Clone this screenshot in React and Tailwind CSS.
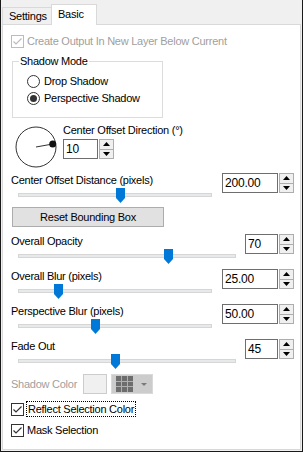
import React from 'react';

const font = { fontFamily: '"Liberation Sans", Arial, sans-serif' };

const Check = ({ disabled }) => (
    <div className={`w-[13px] h-[13px] shrink-0 border bg-white flex items-center justify-center ${disabled ? 'border-[#bcbcbc]' : 'border-[#333333]'}`}>
        <svg width="11" height="11" viewBox="0 0 11 11">
            <path d="M1.5 5.5 L4 8 L9.5 2.5" fill="none" stroke={disabled ? '#bcbcbc' : '#333333'} strokeWidth="1.2" />
        </svg>
    </div>
);

const Radio = ({ checked, label }) => (
    <div className="flex items-center h-[16px] ml-[14px]">
        <div className="w-[13px] h-[13px] rounded-full border border-[#333333] bg-white flex items-center justify-center">
            {checked && <div className="w-[7px] h-[7px] rounded-full bg-[#333333]" />}
        </div>
        <span className="ml-[4px]">{label}</span>
    </div>
);

const Spin = ({ value, boxW }) => (
    <div className="flex h-[20px]">
        <div className={`${boxW} h-[20px] border border-[#6e6e6e] bg-white pl-[2px] flex items-center text-[12px] tracking-[-0.2px] text-black`}>
            {value}
        </div>
        <div className="ml-[1px] w-[15px] h-[20px] flex flex-col border border-[#adadad] bg-[#f0f0f0]">
            <div className="flex-1 flex items-center justify-center border-b border-[#adadad]">
                <svg width="7" height="4" viewBox="0 0 7 4"><path d="M0 4 L3.5 0 L7 4 Z" fill="#000" /></svg>
            </div>
            <div className="flex-1 flex items-center justify-center">
                <svg width="7" height="4" viewBox="0 0 7 4"><path d="M0 0 L3.5 4 L7 0 Z" fill="#000" /></svg>
            </div>
        </div>
    </div>
);

const Thumb = ({ pos }) => (
    <svg className={`absolute top-[-6px] ${pos}`} width="9" height="15" viewBox="0 0 9 15">
        <path d="M0 0 H9 V10 L4.5 15 L0 10 Z" fill="#0078d7" />
    </svg>
);

const SliderRow = ({ label, value, boxW, trackW, pos }) => (
    <div className="h-[35px]">
        <div className="flex justify-between h-[20px]">
            <span className="leading-[14px]">{label}</span>
            <Spin value={value} boxW={boxW} />
        </div>
        <div className={`relative ml-[7px] ${trackW} h-[4px] bg-[#e7eaea] border border-[#d6d6d6]`}>
            <Thumb pos={pos} />
        </div>
    </div>
);

const rows = [
    { label: 'Overall Opacity', value: '70', boxW: 'w-[33px]', trackW: 'w-[218px]', pos: 'left-[145px]' },
    { label: 'Overall Blur (pixels)', value: '25.00', boxW: 'w-[56px]', trackW: 'w-[194px]', pos: 'left-[35px]' },
    { label: 'Perspective Blur (pixels)', value: '50.00', boxW: 'w-[56px]', trackW: 'w-[194px]', pos: 'left-[72px]' },
    { label: 'Fade Out', value: '45', boxW: 'w-[33px]', trackW: 'w-[218px]', pos: 'left-[92px]' },
];

export default function App() {
    return (
        <div className="w-[303px] h-[452px] bg-[#f0f0f0] border-l border-r border-b border-[#1a1a1a] flex flex-col text-[11px] tracking-[-0.25px] text-black" style={font}>
            {/* Tabs */}
            <div className="flex items-end h-[24px] pl-[1px]">
                <div className="w-[50px] h-[17px] border-t border-l border-r border-[#d9d9d9] bg-[#f0f0f0] pl-[6px] pt-[1px] leading-[14px]">
                    Settings
                </div>
                <div className="relative z-10 ml-[-1px] mb-[-1px] w-[46px] h-[21px] border-t border-l border-r border-[#d9d9d9] bg-white pl-[6px] pt-[2px] leading-[14px]">
                    Basic
                </div>
            </div>

            {/* Panel */}
            <div className="flex-1 mx-[1px] mb-[1px] bg-white border border-[#d9d9d9] pl-[8px] pr-[6px]">
                <div className="mt-[8px] h-[16px] flex items-center">
                    <Check disabled />
                    <span className="ml-[3px] text-[#a0a0a0]">Create Output In New Layer Below Current</span>
                </div>

                <fieldset className="mt-[5px] ml-[1px] w-[151px] border border-[#dcdcdc] pb-[11px]">
                    <legend className="ml-[6px] px-[1px] leading-[14px]">Shadow Mode</legend>
                    <div className="mt-[5px]">
                        <Radio label="Drop Shadow" />
                    </div>
                    <div className="mt-[1px]">
                        <Radio checked label="Perspective Shadow" />
                    </div>
                </fieldset>

                {/* Direction dial */}
                <div className="mt-[5px] flex">
                    <svg className="mt-[3px] ml-[4px]" width="42" height="42" viewBox="0 0 42 42">
                        <circle cx="21" cy="21" r="20" fill="none" stroke="#333333" strokeWidth="1" />
                        <line x1="21" y1="21" x2="37.7" y2="18" stroke="#333333" strokeWidth="1" />
                        <circle cx="37.7" cy="18" r="3.5" fill="#111111" />
                    </svg>
                    <div className="ml-[6px]">
                        <div className="leading-[14px]">Center Offset Direction (°)</div>
                        <div className="mt-[2px]">
                            <Spin value="10" boxW="w-[35px]" />
                        </div>
                    </div>
                </div>

                <div className="mt-[5px]">
                    <SliderRow label="Center Offset Distance (pixels)" value="200.00" boxW="w-[56px]" trackW="w-[194px]" pos="left-[97px]" />
                </div>

                <button className="mt-[-1px] ml-[1px] w-[152px] h-[20px] bg-[#e1e1e1] border border-[#adadad] flex items-center justify-center">
                    Reset Bounding Box
                </button>

                <div className="mt-[7px]">
                    {rows.map((r) => (
                        <SliderRow key={r.label} {...r} />
                    ))}
                </div>

                {/* Shadow color */}
                <div className="flex items-center h-[20px]">
                    <span className="w-[72px] text-[#a0a0a0]">Shadow Color</span>
                    <div className="w-[24px] h-[20px] border border-[#cccccc] bg-[#f0f0f0]" />
                    <div className="ml-[4px] w-[42px] h-[20px] border border-[#d9d9d9] bg-[#cccccc] flex items-center pl-[4px]">
                        <svg width="17" height="16" viewBox="0 0 17 16">
                            <rect x="0" y="0" width="17" height="16" fill="#6d6d6d" />
                            <path d="M5.5 0 V16 M11.5 0 V16 M0 5.5 H17 M0 10.5 H17" stroke="#b0b0b0" strokeWidth="1" />
                        </svg>
                        <svg className="ml-[8px]" width="6" height="3" viewBox="0 0 6 3">
                            <path d="M0 0 L3 3 L6 0 Z" fill="#7a7a7a" />
                        </svg>
                    </div>
                </div>

                <div className="mt-[7px] h-[16px] flex items-center">
                    <Check />
                    <span className="ml-[2px] h-[16px] border border-dotted border-black px-[1px] leading-[14px]">Reflect Selection Color</span>
                </div>
                <div className="mt-[5px] h-[16px] flex items-center">
                    <Check />
                    <span className="ml-[3px]">Mask Selection</span>
                </div>
            </div>
        </div>
    );
}
